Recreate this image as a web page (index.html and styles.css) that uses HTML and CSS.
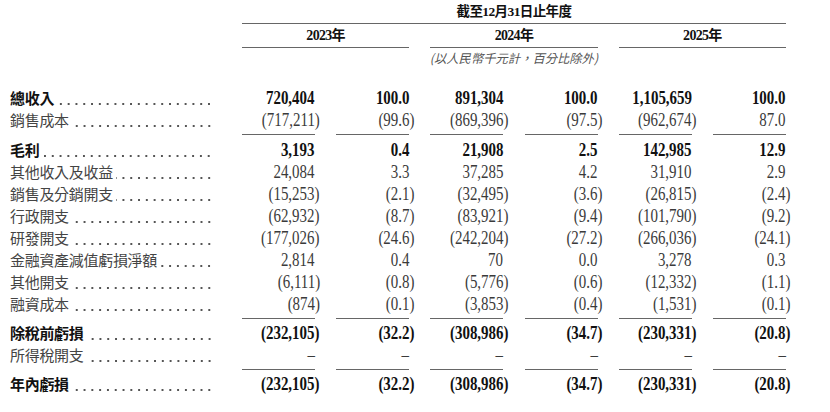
FILE: index.html
```html
<!DOCTYPE html>
<html lang="zh-Hant">
<head>
<meta charset="utf-8">
<title>損益表</title>
<link rel="stylesheet" href="styles.css">
</head>
<body>
<div class="table">
  <div class="grid hdr1"><div class="span6">截至12月31日止年度</div></div>
  <div class="grid hdr2">
    <div class="yr y1">2023年</div>
    <div class="yr">2024年</div>
    <div class="yr">2025年</div>
  </div>
  <div class="grid note"><div class="note-txt">(以人民幣千元計，百分比除外)</div></div>

  <div class="grid row b first">
    <div class="lab"><span>總收入</span><span class="lead"></span></div>
    <div class="n"><span class="v">720,404</span></div><div class="n"><span class="v">100.0</span></div>
    <div class="n"><span class="v">891,304</span></div><div class="n"><span class="v">100.0</span></div>
    <div class="n"><span class="v">1,105,659</span></div><div class="n"><span class="v">100.0</span></div>
  </div>
  <div class="grid row ul">
    <div class="lab"><span>銷售成本</span><span class="lead"></span></div>
    <div class="n"><span class="v neg">(717,211)</span></div><div class="n"><span class="v neg">(99.6)</span></div>
    <div class="n"><span class="v neg">(869,396)</span></div><div class="n"><span class="v neg">(97.5)</span></div>
    <div class="n"><span class="v neg">(962,674)</span></div><div class="n"><span class="v">87.0</span></div>
  </div>
  <div class="grid row b after4">
    <div class="lab"><span>毛利</span><span class="lead"></span></div>
    <div class="n"><span class="v">3,193</span></div><div class="n"><span class="v">0.4</span></div>
    <div class="n"><span class="v">21,908</span></div><div class="n"><span class="v">2.5</span></div>
    <div class="n"><span class="v">142,985</span></div><div class="n"><span class="v">12.9</span></div>
  </div>
  <div class="grid row">
    <div class="lab"><span>其他收入及收益</span><span class="lead"></span></div>
    <div class="n"><span class="v">24,084</span></div><div class="n"><span class="v">3.3</span></div>
    <div class="n"><span class="v">37,285</span></div><div class="n"><span class="v">4.2</span></div>
    <div class="n"><span class="v">31,910</span></div><div class="n"><span class="v">2.9</span></div>
  </div>
  <div class="grid row">
    <div class="lab"><span>銷售及分銷開支</span><span class="lead"></span></div>
    <div class="n"><span class="v neg">(15,253)</span></div><div class="n"><span class="v neg">(2.1)</span></div>
    <div class="n"><span class="v neg">(32,495)</span></div><div class="n"><span class="v neg">(3.6)</span></div>
    <div class="n"><span class="v neg">(26,815)</span></div><div class="n"><span class="v neg">(2.4)</span></div>
  </div>
  <div class="grid row">
    <div class="lab"><span>行政開支</span><span class="lead"></span></div>
    <div class="n"><span class="v neg">(62,932)</span></div><div class="n"><span class="v neg">(8.7)</span></div>
    <div class="n"><span class="v neg">(83,921)</span></div><div class="n"><span class="v neg">(9.4)</span></div>
    <div class="n"><span class="v neg">(101,790)</span></div><div class="n"><span class="v neg">(9.2)</span></div>
  </div>
  <div class="grid row">
    <div class="lab"><span>研發開支</span><span class="lead"></span></div>
    <div class="n"><span class="v neg">(177,026)</span></div><div class="n"><span class="v neg">(24.6)</span></div>
    <div class="n"><span class="v neg">(242,204)</span></div><div class="n"><span class="v neg">(27.2)</span></div>
    <div class="n"><span class="v neg">(266,036)</span></div><div class="n"><span class="v neg">(24.1)</span></div>
  </div>
  <div class="grid row">
    <div class="lab"><span>金融資產減值虧損淨額</span><span class="lead"></span></div>
    <div class="n"><span class="v">2,814</span></div><div class="n"><span class="v">0.4</span></div>
    <div class="n"><span class="v">70</span></div><div class="n"><span class="v">0.0</span></div>
    <div class="n"><span class="v">3,278</span></div><div class="n"><span class="v">0.3</span></div>
  </div>
  <div class="grid row">
    <div class="lab"><span>其他開支</span><span class="lead"></span></div>
    <div class="n"><span class="v neg">(6,111)</span></div><div class="n"><span class="v neg">(0.8)</span></div>
    <div class="n"><span class="v neg">(5,776)</span></div><div class="n"><span class="v neg">(0.6)</span></div>
    <div class="n"><span class="v neg">(12,332)</span></div><div class="n"><span class="v neg">(1.1)</span></div>
  </div>
  <div class="grid row ul">
    <div class="lab"><span>融資成本</span><span class="lead"></span></div>
    <div class="n"><span class="v neg">(874)</span></div><div class="n"><span class="v neg">(0.1)</span></div>
    <div class="n"><span class="v neg">(3,853)</span></div><div class="n"><span class="v neg">(0.4)</span></div>
    <div class="n"><span class="v neg">(1,531)</span></div><div class="n"><span class="v neg">(0.1)</span></div>
  </div>
  <div class="grid row b after3">
    <div class="lab"><span>除稅前虧損</span><span class="lead"></span></div>
    <div class="n"><span class="v neg">(232,105)</span></div><div class="n"><span class="v neg">(32.2)</span></div>
    <div class="n"><span class="v neg">(308,986)</span></div><div class="n"><span class="v neg">(34.7)</span></div>
    <div class="n"><span class="v neg">(230,331)</span></div><div class="n"><span class="v neg">(20.8)</span></div>
  </div>
  <div class="grid row ul">
    <div class="lab"><span>所得稅開支</span><span class="lead"></span></div>
    <div class="n"><span class="v">–</span></div><div class="n"><span class="v">–</span></div>
    <div class="n"><span class="v">–</span></div><div class="n"><span class="v">–</span></div>
    <div class="n"><span class="v">–</span></div><div class="n"><span class="v">–</span></div>
  </div>
  <div class="grid row b after3">
    <div class="lab"><span>年內虧損</span><span class="lead"></span></div>
    <div class="n"><span class="v neg">(232,105)</span></div><div class="n"><span class="v neg">(32.2)</span></div>
    <div class="n"><span class="v neg">(308,986)</span></div><div class="n"><span class="v neg">(34.7)</span></div>
    <div class="n"><span class="v neg">(230,331)</span></div><div class="n"><span class="v neg">(20.8)</span></div>
  </div>
</div>
</body>
</html>
```
FILE: styles.css
```css
html, body {
  margin: 0;
  padding: 0;
  background: #ffffff;
}
body {
  font-family: "Liberation Serif", "Noto Sans CJK TC", serif;
  color: #3a3a3a;
}
.table {
  padding-left: 8px;
  width: 800px;
}
.grid {
  display: grid;
  grid-template-columns: 212.8px repeat(6, 73px);
  column-gap: 21.2px;
  align-items: start;
}

/* header */
.hdr1 .span6 {
  grid-column: 2 / 8;
  height: 23px;
  line-height: 23px;
  text-align: center;
  font-size: 13.5px;
  font-weight: bold;
  letter-spacing: -0.6px;
  color: #111;
  border-bottom: 1px solid #666;
}
.hdr2 .yr {
  grid-column: span 2;
  height: 23px;
  line-height: 23px;
  text-align: center;
  font-size: 14px;
  font-weight: bold;
  letter-spacing: -0.7px;
  color: #111;
  border-bottom: 1px solid #666;
}
.hdr2 .y1 {
  grid-column: 2 / span 2;
}
.note .note-txt {
  grid-column: 4 / span 2;
  display: flex;
  justify-content: center;
  white-space: nowrap;
  height: 20px;
  line-height: 20px;
  font-family: "Noto Sans CJK TC", sans-serif;
  font-style: italic;
  font-size: 12.3px;
  color: #555;
}

/* rows */
.row.first { margin-top: 19px; }
.row.after4 { margin-top: 4px; }
.row.after3 { margin-top: 3px; }

.lab {
  display: flex;
  align-items: flex-start;
  height: 22px;
  line-height: 22px;
  padding-left: 2px;
  padding-right: 7.8px;
  font-family: "Noto Sans CJK TC", sans-serif;
  font-size: 15px;
  letter-spacing: -0.3px;
  color: #444;
  white-space: nowrap;
}
.lead {
  flex: 1;
  height: 22px;
  margin-left: 3px;
  background-image: radial-gradient(circle, #555 0.8px, rgba(85,85,85,0) 1.3px);
  background-size: 7.8px 4px;
  background-repeat: repeat-x;
  background-position: right 0 bottom 3px;
}
.n {
  height: 22px;
  line-height: 22px;
  text-align: right;
  font-size: 18px;
  white-space: nowrap;
  color: #3a3a3a;
}
.v {
  display: inline-block;
  transform: scaleX(0.83);
  transform-origin: right center;
}
.neg {
  margin-right: -5px;
}
.ul .n {
  padding-bottom: 3px;
  border-bottom: 1px solid #666;
}
.b .n {
  font-weight: bold;
  color: #111;
}
.b .lab {
  font-weight: bold;
  color: #111;
}
```
